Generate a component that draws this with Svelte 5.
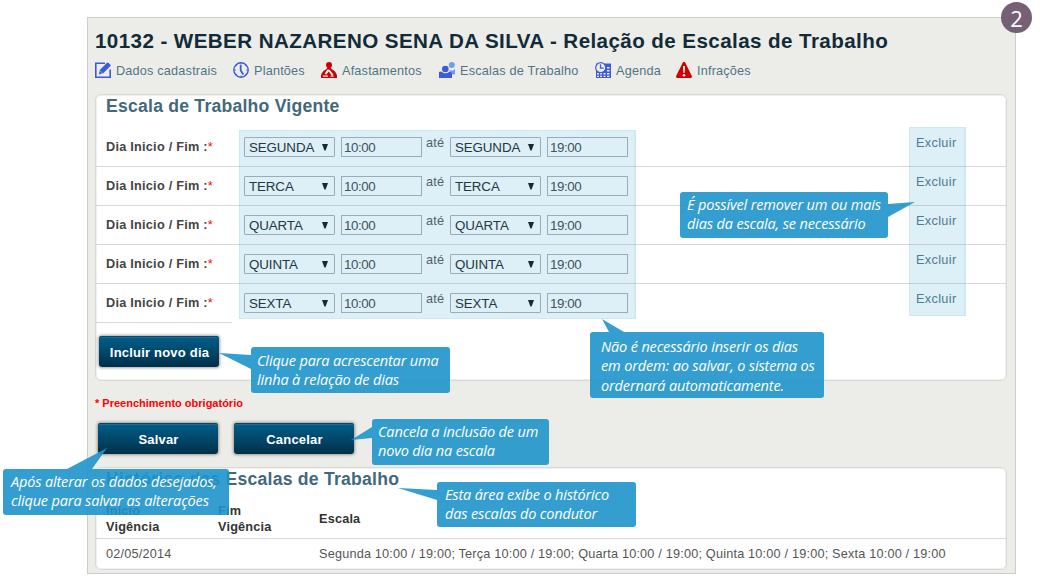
<script>
  const nav = [
    { icon: 'edit', label: 'Dados cadastrais' },
    { icon: 'clock', label: 'Plantões' },
    { icon: 'leave', label: 'Afastamentos' },
    { icon: 'people', label: 'Escalas de Trabalho' },
    { icon: 'agenda', label: 'Agenda' },
    { icon: 'alert', label: 'Infrações' }
  ];
  const days = ['SEGUNDA', 'TERCA', 'QUARTA', 'QUINTA', 'SEXTA'];
  const notes = [
    { name: 'remove', lines: ['É possível remover um ou mais', 'dias da escala, se necessário'], tail: '208,12 235,10 208,25' },
    { name: 'add', lines: ['Clique para acrescentar uma', 'linha à relação de dias'], tail: '0,8 -32,6 0,22' },
    { name: 'order', lines: ['Não é necessário inserir os dias', 'em ordem: ao salvar, o sistema os', 'ordernará automaticamente.'], tail: '19,0 12,-13 34,0' },
    { name: 'cancel', lines: ['Cancela a inclusão de um', 'novo dia na escala'], tail: '0,8 -21,21 0,19' },
    { name: 'save', lines: ['Após alterar os dados desejados,', 'clique para salvar as alterações'], tail: '64,0 104,-21 89,0' },
    { name: 'past', lines: ['Esta área exibe o histórico', 'das escalas do condutor'], tail: '0,8 -39,6 0,18' }
  ];
</script>

{#snippet icon(name)}
  <svg class="icon" viewBox="0 0 16 16" width="16" height="16">
    {#if name === 'edit'}
      <path d="M10 1.2H.8v14h14.4V7.500" fill="none" stroke="#3b5bdb" stroke-width="1.6" />
      <path d="M3.800 12.400l1.200-4.700L11.800.9a1.300 1.300 0 0 1 1.900 0l1.500 1.500a1.300 1.300 0 0 1 0 1.900L8.500 11z" fill="#3b5bdb" />
      <path d="M5.300 9l1.900 1.900" stroke="#ecede8" stroke-width=".5" />
    {:else if name === 'clock'}
      <circle cx="8" cy="8" r="7.2" fill="none" stroke="#3b5bdb" stroke-width="1.4" />
      <path d="M8 .8v2M8 13.500v2M.8 8h2.200M13 8h2.200M3 3l1 1M13 3l-1 1M3 13l1-1M13 13l-1-1" stroke="#3b5bdb" stroke-width=".8" />
      <path d="M7.7 3v5.4l2.6 4" fill="none" stroke="#3b5bdb" stroke-width="1.8" />
    {:else if name === 'leave'}
      <circle cx="8" cy="3" r="3" fill="#cf0000" />
      <path d="M6.700 5h2.600l1.400 2.300c2.500.8 5.300 4.200 5.300 6.700v2H0v-2c0-2.500 2.800-5.900 5.300-6.700z" fill="#cf0000" />
      <path d="M6.300 7.500l2.400.3 3.800 5-1.500 1L7.700 9.600l-2.500 3.200-1.500-1z" fill="#ecede8" />
      <path d="M1.800 14.200h5.200M9.500 14.200h3" stroke="#ecede8" stroke-width="1.200" />
    {:else if name === 'people'}
      <circle cx="12.800" cy="3" r="3" fill="#6f9ff5" />
      <path d="M10 8c2 1.200 4 .5 6-1v5.500h-4z" fill="#6f9ff5" />
      <circle cx="6.300" cy="7" r="3.300" fill="#3b5bdb" />
      <path d="M0 10c1-.8 2-.8 3 0 2 1.800 5 1.800 7 0 1.500-.5 3 .500 3 2v4H0z" fill="#3b5bdb" />
    {:else if name === 'agenda'}
      <rect x="1" y="1.500" width="15" height="14.500" fill="#3b5bdb" />
      <path d="M2 11h2v1.500H2zM5 11h2v1.500H5zM8.500 11h2v1.500h-2zM12 11h2.500v1.500H12zM12 8h2.500v1.500H12zM12 5h2.500v1.500H12zM2 13.700h2V15H2zM5 13.700h2V15H5zM8.500 13.700h2V15h-2zM12 13.700h2.500V15H12z" fill="#ecede8" />
      <circle cx="5.700" cy="5.700" r="5" fill="#ecede8" stroke="#3b5bdb" stroke-width="1.200" />
      <path d="M5.500 2.300v3.800h3.200" fill="none" stroke="#3b5bdb" stroke-width="1.300" />
    {:else}
      <path d="M8 0c.8 0 1.200.5 1.600 1.200L15.800 14c.5 1.200 0 2-1 2H1.200c-1 0-1.500-.8-1-2L6.400 1.200C6.800.5 7.200 0 8 0z" fill="#cf0000" />
      <path d="M6.900 4h2.200l-.5 7H7.400z" fill="#ecede8" />
      <circle cx="8" cy="13.300" r="1.300" fill="#ecede8" />
    {/if}
  </svg>
{/snippet}

{#snippet picker(day)}
  <div class="select">
    <span>{day}</span>
    <svg width="6" height="7" viewBox="0 0 6 7"><path d="M0 0h6L3.600 6.500H2.400z" fill="#111" /></svg>
  </div>
{/snippet}

<div class="stage">
  <main class="frame">
    <h1>10132 - WEBER NAZARENO SENA DA SILVA - Relação de Escalas de Trabalho</h1>
    <nav>
      {#each nav as item}
        <div class="link">{@render icon(item.icon)}<span>{item.label}</span></div>
      {/each}
    </nav>

    <section class="card current">
      <h2>Escala de Trabalho Vigente</h2>
      {#each days as day}
        <div class="row">
          <div class="label">Dia Inicio / Fim :<b>*</b></div>
          {@render picker(day)}
          <div class="time">10:00</div>
          <div class="until">até</div>
          {@render picker(day)}
          <div class="time">19:00</div>
          <div class="delete">Excluir</div>
        </div>
      {/each}
      <div class="more"><div class="button">Incluir novo dia</div></div>
    </section>

    <p class="required">* Preenchimento obrigatório</p>
    <div class="actions">
      <div class="button">Salvar</div>
      <div class="button">Cancelar</div>
    </div>

    <section class="card history">
      <h2>Histórico das Escalas de Trabalho</h2>
      <div class="record head">
        <div>Início<br />Vigência</div>
        <div>Fim<br />Vigência</div>
        <div>Escala</div>
      </div>
      <div class="record">
        <div>02/05/2014</div>
        <div></div>
        <div>Segunda 10:00 / 19:00; Terça 10:00 / 19:00; Quarta 10:00 / 19:00; Quinta 10:00 / 19:00; Sexta 10:00 / 19:00</div>
      </div>
    </section>
  </main>

  <div class="highlight fields"></div>
  <div class="highlight removal"></div>

  {#each notes as note}
    <div class="note {note.name}">
      <svg class="tail" width="1" height="1"><polygon points={note.tail} /></svg>
      {#each note.lines as line}<div>{line}</div>{/each}
    </div>
  {/each}

  <div class="badge">2</div>
</div>

<style>
  :global(body) { background: #fff; }
  .stage {
    position: relative;
    box-sizing: border-box;
    width: 1041px;
    height: 583px;
    padding: 17px 25px 9px 87px;
    overflow: hidden;
    font: 12.700px/16px "Liberation Sans", Arial, sans-serif;
    letter-spacing: 0.190px;
    color: #555;
    white-space: nowrap;
  }
  .frame {
    box-sizing: border-box;
    height: 557px;
    padding: 12px 8px 0 7px;
    background: #ecede8;
    border: 1px solid #ccc;
    display: flex;
    flex-direction: column;
  }
  h1 {
    margin: 0;
    font-size: 20.600px;
    line-height: 22px;
    letter-spacing: 0.410px;
    color: #122b38;
  }
  nav {
    display: grid;
    grid-template-columns: 138px 88px 118px 156px 81px 100px;
    margin-top: 10px;
    height: 16px;
    color: #4f7586;
  }
  .link { display: flex; gap: 5px; }
  .link span { line-height: 19px; }
  .icon { flex: none; }
  .card {
    box-sizing: border-box;
    flex: none;
    background: #fff;
    border: 1px solid #d8d9d8;
    border-radius: 6px;
    box-shadow: inset 0 0 0 1px #f0f0f0;
  }
  .current { height: 287px; margin-top: 16px; }
  h2 {
    margin: 0;
    padding-left: 10px;
    font-size: 17.600px;
    letter-spacing: 0.230px;
    line-height: 23px;
    color: #42687b;
  }
  .current h2 { height: 33px; }
  .row {
    display: grid;
    grid-template-columns: 138px 91px 87px 28px 91px 87px 1fr;
    height: 38px;
    padding-left: 10px;
    border-bottom: 1px solid #d8d8da;
  }
  .row:nth-of-type(5) {
    border-bottom-color: transparent;
    background: linear-gradient(#d8d8da, #d8d8da) 0 100% / 136px 1px no-repeat border-box;
  }
  .label { padding-top: 11px; font-weight: bold; letter-spacing: 0.250px; color: #444; }
  .label b { color: #f00; font-weight: normal; }
  .select, .time {
    box-sizing: border-box;
    height: 20px;
    margin-top: 9px;
    border: 1px solid #adb0b3;
    font-size: 13.330px;
    line-height: 19px;
    letter-spacing: -0.100px;
    color: #222;
  }
  .select { display: flex; align-items: center; justify-content: space-between; padding: 0 6px 0 4px; border-radius: 1px; }
  .time { margin-left: 6px; padding-left: 2px; letter-spacing: -0.400px; color: #444; }
  .until { padding: 7px 0 0 4px; }
  .delete { padding: 7px 0 0 288px; letter-spacing: 0.350px; color: #4f7586; }
  .more { padding: 13px 0 0 3px; }
  .button {
    box-sizing: border-box;
    width: 120px;
    height: 31px;
    border-radius: 3px;
    background: linear-gradient(#005f8b, #00304a);
    box-shadow: inset 0 1px 0 #07496b, inset 0 2px 0 #1f6d93, 0 0 3px 1px rgba(60, 50, 45, 0.450);
    color: #fff;
    font-size: 13px;
    font-weight: bold;
    letter-spacing: 0.200px;
    line-height: 33px;
    padding-left: 1px;
    text-align: center;
  }
  .required { margin: 14px 0 0; font-size: 11px; font-weight: bold; letter-spacing: 0; color: #f00; }
  .actions { display: flex; gap: 16px; padding: 12px 0 0 3px; }
  .history { height: 103px; margin-top: 13px; }
  .history h2 { height: 31px; }
  .record { display: grid; grid-template-columns: 112px 101px 1fr; padding-left: 10px; align-items: center; height: 30px; }
  .record.head { height: 39px; border-bottom: 1px solid #d8d8da; font-weight: bold; color: #333; }
  .highlight {
    position: absolute;
    box-sizing: border-box;
    background: rgba(53, 160, 210, 0.170);
    border: 1px solid rgba(120, 200, 230, 0.150);
    border-right-width: 2px;
  }
  .fields { left: 239px; top: 130px; width: 397px; height: 189px; }
  .removal { left: 909px; top: 127px; width: 57px; height: 189px; }
  .note {
    position: absolute;
    box-sizing: border-box;
    padding: 3px 0 0 6px;
    border-radius: 3px;
    background: rgba(31, 148, 203, 0.900);
    color: #fff;
    font: italic 14.500px/19.300px "Open Sans", sans-serif;
    letter-spacing: -0.150px;
  }
  .tail { position: absolute; left: 0; top: 0; overflow: visible; fill: rgba(31, 148, 203, 0.900); }
  .remove { left: 680px; top: 192px; width: 208px; height: 46px; padding-left: 7px; }
  .add { left: 251px; top: 347px; width: 199px; height: 46px; padding-top: 4px; }
  .order { left: 590px; top: 332px; width: 234px; height: 66px; padding-left: 11px; padding-top: 5px; }
  .cancel { left: 372px; top: 419px; width: 177px; height: 46px; }
  .save { left: 3px; top: 469px; width: 226px; height: 46px; padding-left: 8px; }
  .past { left: 437px; top: 482px; width: 199px; height: 45px; padding-left: 8px; }
  .badge {
    position: absolute;
    left: 1001px;
    top: 2px;
    width: 31px;
    height: 31px;
    border-radius: 50%;
    background: rgba(108, 84, 107, 0.930);
    color: #fff;
    font: 22px/32px "Open Sans", sans-serif;
    text-align: center;
    letter-spacing: 0;
  }
</style>
